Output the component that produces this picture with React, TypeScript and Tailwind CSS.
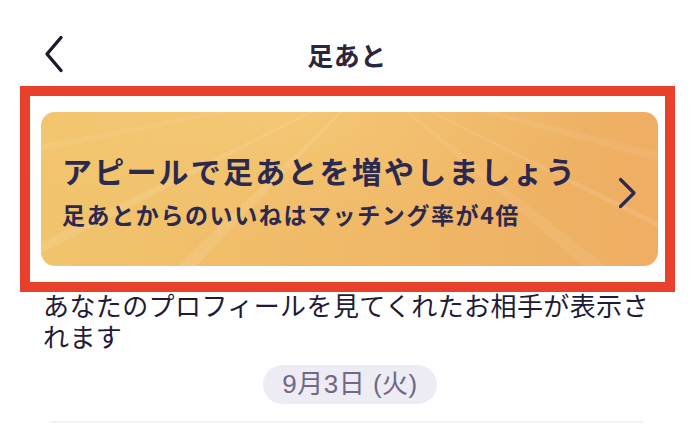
const navy = 'text-[#2c2950]';

function BackChevron() {
  return (
    <svg width="20" height="38" viewBox="0 0 20 38" fill="none" className="text-[#1d1a2c]">
      <polyline
        points="17,2.5 3,19 17,35.5"
        stroke="currentColor"
        strokeWidth="3.4"
        strokeLinecap="round"
        strokeLinejoin="round"
      />
    </svg>
  );
}

function NextChevron() {
  return (
    <svg width="19" height="32" viewBox="0 0 19 32" fill="none" className={navy}>
      <polyline
        points="2.5,2.5 16,16 2.5,29.5"
        stroke="currentColor"
        strokeWidth="3.2"
        strokeLinecap="round"
        strokeLinejoin="round"
      />
    </svg>
  );
}

// soft light streaks fanning out behind the promo text
function Rays() {
  const rays = [
    'M330,-30 L-40,150 L-40,162 Z',
    'M330,-30 L-40,40 L-40,48 Z',
    'M330,-30 L120,170 L140,170 Z',
    'M330,-30 L700,60 L700,72 Z',
    'M330,-30 L700,150 L700,158 Z',
    'M330,-30 L560,170 L585,170 Z',
    'M330,-30 L700,-10 L700,2 Z'
  ];
  return (
    <svg
      className="pointer-events-none absolute inset-0 h-full w-full"
      viewBox="0 0 617 154"
      preserveAspectRatio="none"
    >
      {rays.map((d, i) => (
        <path key={i} d={d} fill="#ffffff" opacity={i % 2 ? 0.07 : 0.1} />
      ))}
    </svg>
  );
}

function PromoCard() {
  return (
    <div className="relative flex h-[154px] w-[617px] items-center overflow-hidden rounded-[14px] bg-linear-to-r from-[#f1c46d] via-[#f0b967] to-[#eeae63] pr-[21px] pl-[21px]">
      <div className="absolute inset-0 bg-[radial-gradient(ellipse_at_40%_0%,rgba(248,214,130,0.45),transparent_60%)]" />
      <Rays />
      <div className={`relative flex grow flex-col font-bold ${navy}`}>
        <span className="text-[30px] leading-[38px] tracking-[2.2px]">
          アピールで足あとを増やしましょう
        </span>
        <span className="mt-[11px] text-[23px] leading-[28px] tracking-[1.6px]">
          足あとからのいいねはマッチング率が4倍
        </span>
      </div>
      <div className="relative mt-[8px]">
        <NextChevron />
      </div>
    </div>
  );
}

export default function App() {
  return (
    <div
      className="h-[424px] w-[694px] overflow-hidden bg-white"
      style={{ fontFamily: '"Noto Sans CJK JP", "Noto Sans", sans-serif' }}
    >
      <header className="relative flex h-[86px] items-center justify-center pt-[24px]">
        <div className="absolute top-[35px] left-[44px]">
          <BackChevron />
        </div>
        <h1 className="text-[26px] leading-[30px] font-bold tracking-[0.5px] text-[#2a2642]">足あと</h1>
      </header>

      <div className="ml-[20px] w-[655px] border-[10px] border-[#e8402a] pt-[16px] pr-[7px] pb-[16px] pl-[11px]">
        <PromoCard />
      </div>

      <p className="-mt-[3px] box-content w-[624px] pl-[43px] text-[26px] leading-[31px] tracking-[0.4px] text-[#1f1b35]">
        あなたのプロフィールを見てくれたお相手が表示されます
      </p>

      <div className="mt-[14px] flex justify-center pl-[6px]">
        <div
          className="flex h-[39px] w-[174px] items-center justify-center rounded-full bg-[#edebf3] text-[26px] tracking-[0.5px] text-[#6e6985]"
          style={{ fontFamily: '"Liberation Sans", "Noto Sans CJK JP", sans-serif' }}
        >
          9月3日 (火)
        </div>
      </div>

      <div className="mx-[50px] mt-[17px] h-[2px] bg-[#f3f2f5]" />
    </div>
  );
}
